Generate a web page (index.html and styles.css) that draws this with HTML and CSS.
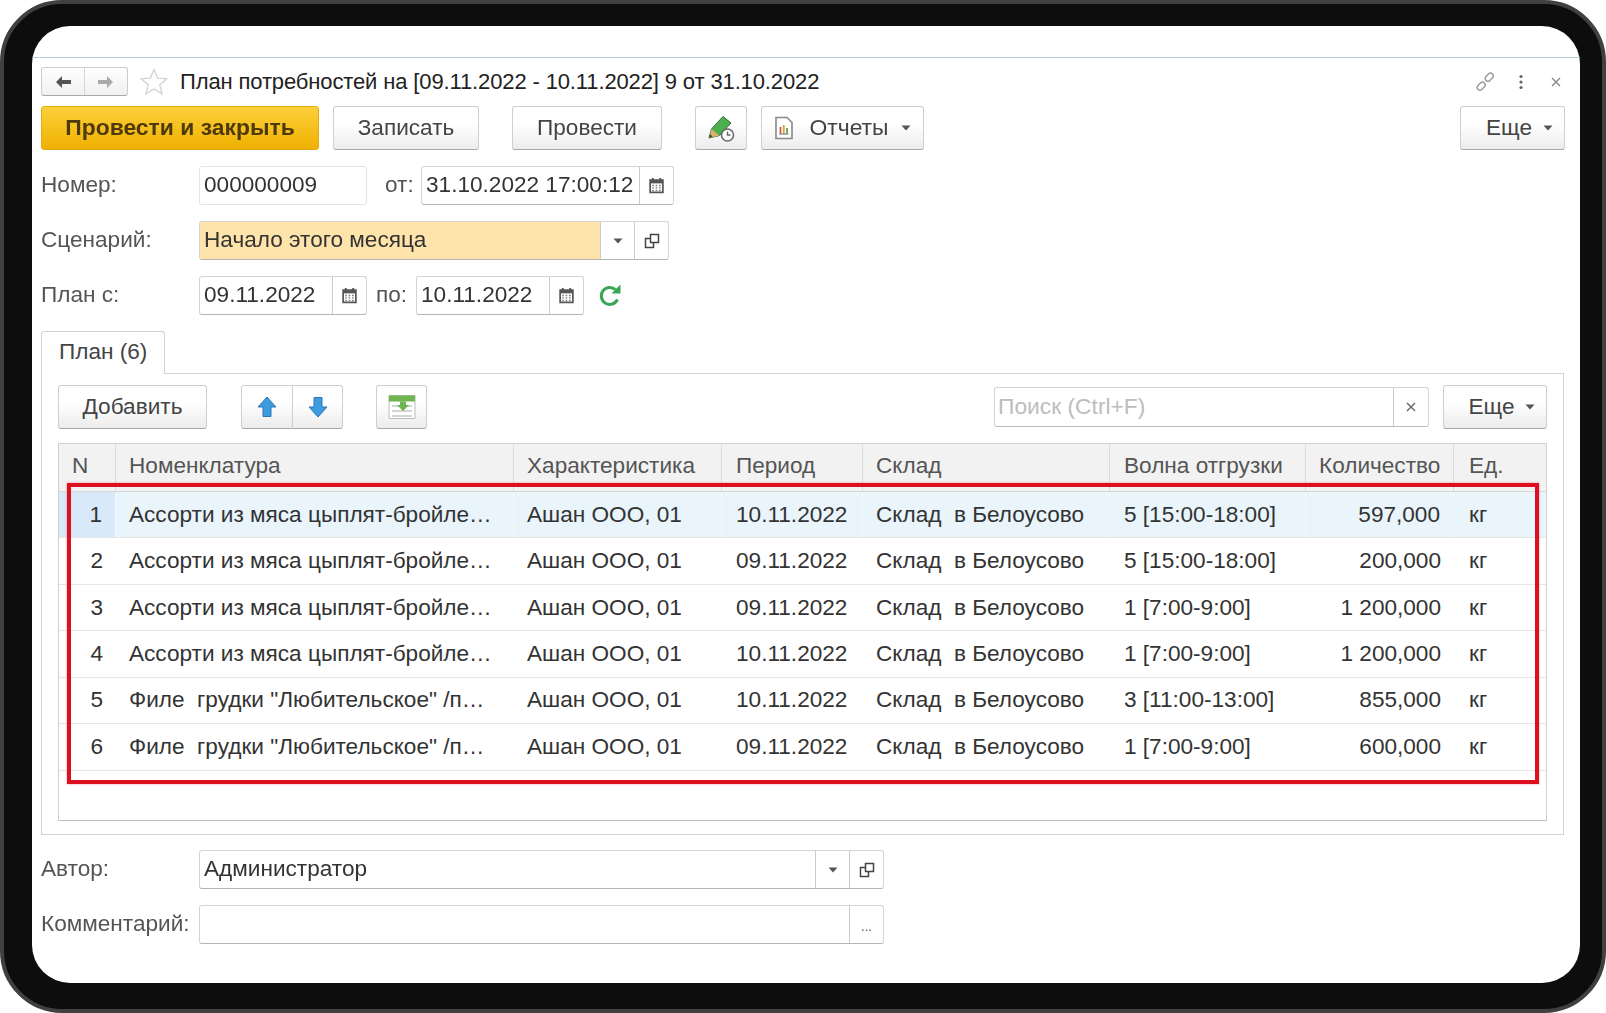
FILE: index.html
```html
<!DOCTYPE html>
<html lang="ru">
<head>
<meta charset="utf-8">
<title>План потребностей</title>
<link rel="stylesheet" href="styles.css">
</head>
<body>
<svg class="defs" width="0" height="0">
  <symbol id="cal" viewBox="0 0 16 16">
    <path d="M2 3h12v11.500H2z" fill="#fff" stroke="#555" stroke-width="1.600"/>
    <path d="M2 3h12v3H2z" fill="#555"/>
    <path d="M4.500 1v3M11.500 1v3" stroke="#555" stroke-width="1.800"/>
    <path d="M4 8h1.500M7.200 8h1.500M10.400 8h1.500M4 10.300h1.500M7.200 10.300h1.500M10.400 10.300h1.500M4 12.500h1.500M7.200 12.500h1.500M10.400 12.500h1.500" stroke="#777" stroke-width="1.200"/>
  </symbol>
  <symbol id="copy" viewBox="0 0 16 16">
    <path d="M6.500 1.500h8v8h-8z" fill="#fff" stroke="#444" stroke-width="1.500"/>
    <path d="M6.500 5.500h-5v9h8v-5" fill="none" stroke="#444" stroke-width="1.500"/>
  </symbol>
  <symbol id="caret" viewBox="0 0 10 6">
    <path d="M0.500 0.500h9L5 5.500z" fill="#555"/>
  </symbol>
</svg>

<div class="device">
  <main class="screen">
    <div class="top-space"></div>

    <div class="title-row">
      <div class="nav-group">
        <span class="nav-btn">
          <svg width="18" height="14" viewBox="0 0 18 14"><path d="M8 1L2 7l6 6V9h9V5H8z" fill="#555"/></svg>
        </span>
        <span class="nav-btn nav-btn-last">
          <svg width="18" height="14" viewBox="0 0 18 14"><path d="M10 1l6 6-6 6V9H1V5h9z" fill="#aaa"/></svg>
        </span>
      </div>
      <svg class="star" width="30" height="30" viewBox="0 0 30 30"><path d="M15 2.500l3.600 8.600 9.200.7-7 6 2.200 9L15 22l-8 4.800 2.200-9-7-6 9.200-.7z" fill="#fff" stroke="#d4d4d4" stroke-width="1.400"/></svg>
      <h1 class="doc-title">План потребностей на [09.11.2022 - 10.11.2022] 9 от 31.10.2022</h1>
      <div class="win-icons">
        <svg class="win-link" width="20" height="20" viewBox="0 0 20 20"><g fill="none" stroke="#999" stroke-width="1.400"><rect x="9.500" y="2.500" width="9" height="5.500" rx="2.700" transform="rotate(-45 14 5)"/><rect x="1.500" y="11.500" width="9" height="5.500" rx="2.700" transform="rotate(-45 6 14)"/></g></svg>
        <svg class="win-dots" width="6" height="16" viewBox="0 0 6 16"><g fill="#666"><circle cx="3" cy="2.500" r="1.600"/><circle cx="3" cy="8" r="1.600"/><circle cx="3" cy="13.500" r="1.600"/></g></svg>
        <svg width="12" height="12" viewBox="0 0 12 12"><path d="M2 2l8 8M10 2l-8 8" stroke="#888" stroke-width="1.400"/></svg>
      </div>
    </div>

    <div class="command-bar">
      <button class="btn btn-primary">Провести и закрыть</button>
      <button class="btn btn-write">Записать</button>
      <button class="btn btn-post">Провести</button>
      <button class="btn btn-icon">
        <svg width="30" height="30" viewBox="0 0 30 30">
          <path d="M3 25l2.500-9L17 3.500l8 6.500-11.500 12.500z" fill="#4caf50" stroke="#2e6b32" stroke-width="1"/>
          <path d="M3 25l2.500-9 8 6.500z" fill="#d9b36a"/>
          <path d="M3 25l1-3.800 2.800 2.400z" fill="#444"/>
          <circle cx="21.500" cy="22" r="6" fill="#fff" stroke="#666" stroke-width="1.500"/>
          <path d="M21.500 18.500V22h3" fill="none" stroke="#666" stroke-width="1.400"/>
        </svg>
      </button>
      <button class="btn btn-reports">
        <svg width="20" height="24" viewBox="0 0 20 24">
          <path d="M2 1.500h11l5 5v16H2z" fill="#fff" stroke="#888" stroke-width="1.600"/>
          <path d="M6.500 11v6.500" stroke="#d9534f" stroke-width="1.800"/><path d="M9.800 9v8.500" stroke="#e0a030" stroke-width="1.800"/><path d="M13 12v5.500" stroke="#5aa85a" stroke-width="1.800"/>
          <path d="M5 18h9.500" stroke="#666"/>
        </svg>
        <span>Отчеты</span>
        <svg class="caret" width="10" height="6"><use href="#caret"/></svg>
      </button>
      <button class="btn btn-more btn-more-top"><span>Еще</span><svg class="caret" width="10" height="6"><use href="#caret"/></svg></button>
    </div>

    <div class="form-row first-row">
      <label class="label">Номер:</label>
      <div class="field field-number"><span class="field-value">000000009</span></div>
      <label class="label-inline label-from">от:</label>
      <div class="field field-datetime">
        <span class="field-value">31.10.2022 17:00:12</span>
        <span class="field-btn"><svg width="17" height="17"><use href="#cal"/></svg></span>
      </div>
    </div>

    <div class="form-row">
      <label class="label">Сценарий:</label>
      <div class="field field-scenario">
        <span class="field-value field-yellow">Начало этого месяца</span>
        <span class="field-btn"><svg class="caret" width="10" height="6"><use href="#caret"/></svg></span>
        <span class="field-btn"><svg width="16" height="16"><use href="#copy"/></svg></span>
      </div>
    </div>

    <div class="form-row">
      <label class="label">План с:</label>
      <div class="field field-date">
        <span class="field-value">09.11.2022</span>
        <span class="field-btn"><svg width="17" height="17"><use href="#cal"/></svg></span>
      </div>
      <label class="label-inline label-to">по:</label>
      <div class="field field-date">
        <span class="field-value">10.11.2022</span>
        <span class="field-btn"><svg width="17" height="17"><use href="#cal"/></svg></span>
      </div>
      <svg class="refresh" width="26" height="26" viewBox="0 0 26 26"><path d="M20.500 16.500A8.500 8.500 0 1 1 18.500 6.600" fill="none" stroke="#3aa655" stroke-width="3"/><path d="M14.500 10.500h9v-9z" fill="#3aa655"/></svg>
    </div>

    <div class="tabs"><div class="tab">План (6)</div></div>

    <section class="panel">
      <div class="panel-bar">
        <button class="btn btn-add">Добавить</button>
        <div class="btn-group">
          <button class="btn btn-arrow">
            <svg width="22" height="24" viewBox="0 0 22 24"><path d="M11 2L2 12h5v9.500h8V12h5z" fill="#3d9be0" stroke="#2a78b5" stroke-width="1"/></svg>
          </button>
          <button class="btn btn-arrow btn-arrow-last">
            <svg width="22" height="24" viewBox="0 0 22 24"><path d="M11 22L2 12h5V2.500h8V12h5z" fill="#3d9be0" stroke="#2a78b5" stroke-width="1"/></svg>
          </button>
        </div>
        <button class="btn btn-table">
          <svg width="28" height="24" viewBox="0 0 28 24">
            <path d="M1 .5h26v23H1z" fill="#fff" stroke="#bbb"/>
            <path d="M1 .5h26v6H1z" fill="#6eb550"/>
            <path d="M4 11h20M4 16h20M4 21h20" stroke="#aaa"/>
            <path d="M12 6.500h6v3.500h3l-6 6-6-6h3z" fill="#6eb550"/>
          </svg>
        </button>
        <div class="search">
          <span class="search-input">Поиск (Ctrl+F)</span>
          <span class="search-clear"><svg width="10" height="10" viewBox="0 0 10 10"><path d="M1 1l8 8M9 1L1 9" stroke="#666" stroke-width="1.400"/></svg></span>
        </div>
        <button class="btn btn-more btn-more-panel"><span>Еще</span><svg class="caret" width="10" height="6"><use href="#caret"/></svg></button>
      </div>

      <div class="grid">
        <div class="grid-row grid-head">
          <div class="cell">N</div>
          <div class="cell">Номенклатура</div>
          <div class="cell">Характеристика</div>
          <div class="cell cell-date">Период</div>
          <div class="cell">Склад</div>
          <div class="cell cell-wave">Волна отгрузки</div>
          <div class="cell">Количество</div>
          <div class="cell cell-unit">Ед.</div>
        </div>
        <div class="grid-row grid-row-active">
          <div class="cell cell-num cell-num-active">1</div><div class="cell">Ассорти из мяса цыплят-бройле…</div><div class="cell">Ашан ООО, 01</div><div class="cell cell-date">10.11.2022</div><div class="cell">Склад  в Белоусово</div><div class="cell cell-wave">5 [15:00-18:00]</div><div class="cell cell-right">597,000</div><div class="cell cell-unit">кг</div>
        </div>
        <div class="grid-row">
          <div class="cell cell-num">2</div><div class="cell">Ассорти из мяса цыплят-бройле…</div><div class="cell">Ашан ООО, 01</div><div class="cell cell-date">09.11.2022</div><div class="cell">Склад  в Белоусово</div><div class="cell cell-wave">5 [15:00-18:00]</div><div class="cell cell-right">200,000</div><div class="cell cell-unit">кг</div>
        </div>
        <div class="grid-row">
          <div class="cell cell-num">3</div><div class="cell">Ассорти из мяса цыплят-бройле…</div><div class="cell">Ашан ООО, 01</div><div class="cell cell-date">09.11.2022</div><div class="cell">Склад  в Белоусово</div><div class="cell cell-wave">1 [7:00-9:00]</div><div class="cell cell-right">1 200,000</div><div class="cell cell-unit">кг</div>
        </div>
        <div class="grid-row">
          <div class="cell cell-num">4</div><div class="cell">Ассорти из мяса цыплят-бройле…</div><div class="cell">Ашан ООО, 01</div><div class="cell cell-date">10.11.2022</div><div class="cell">Склад  в Белоусово</div><div class="cell cell-wave">1 [7:00-9:00]</div><div class="cell cell-right">1 200,000</div><div class="cell cell-unit">кг</div>
        </div>
        <div class="grid-row">
          <div class="cell cell-num">5</div><div class="cell">Филе  грудки "Любительское" /п…</div><div class="cell">Ашан ООО, 01</div><div class="cell cell-date">10.11.2022</div><div class="cell">Склад  в Белоусово</div><div class="cell cell-wave">3 [11:00-13:00]</div><div class="cell cell-right">855,000</div><div class="cell cell-unit">кг</div>
        </div>
        <div class="grid-row">
          <div class="cell cell-num">6</div><div class="cell">Филе  грудки "Любительское" /п…</div><div class="cell">Ашан ООО, 01</div><div class="cell cell-date">09.11.2022</div><div class="cell">Склад  в Белоусово</div><div class="cell cell-wave">1 [7:00-9:00]</div><div class="cell cell-right">600,000</div><div class="cell cell-unit">кг</div>
        </div>
        <div class="highlight"></div>
      </div>
    </section>

    <div class="form-row author-row">
      <label class="label">Автор:</label>
      <div class="field field-wide">
        <span class="field-value">Администратор</span>
        <span class="field-btn"><svg class="caret" width="10" height="6"><use href="#caret"/></svg></span>
        <span class="field-btn"><svg width="16" height="16"><use href="#copy"/></svg></span>
      </div>
    </div>
    <div class="form-row">
      <label class="label">Комментарий:</label>
      <div class="field field-wide">
        <span class="field-value"></span>
        <span class="field-btn field-dots">...</span>
      </div>
    </div>
  </main>
</div>
</body>
</html>
```

FILE: styles.css
```css
* { box-sizing: border-box; }
html, body { margin: 0; padding: 0; background: #fff; }
body { font-family: "Liberation Sans", Arial, sans-serif; color: #333; font-size: 22.600px; overflow: hidden; }
.defs { position: absolute; }

.device {
  width: 1606px;
  height: 1013px;
  padding: 22px 22px 26px 27px;
  background: #0d0d0d;
  border: 4px solid #404040;
  border-radius: 62px;
}
.screen {
  width: 1548px;
  height: 957px;
  padding: 0 15px 0 9px;
  margin-left: 1px;
  background: #fff;
  border-radius: 38px;
  overflow: hidden;
  filter: blur(0.4px);
}
.top-space { height: 32px; margin: 0 -15px 0 -9px; border-bottom: 1px solid #b9ced6; }

/* title row */
.title-row { display: flex; align-items: center; height: 29px; margin-top: 9px; }
.nav-group { display: flex; width: 87px; height: 29px; border: 1px solid #ccc; border-bottom-color: #aaa; border-radius: 3px; background: linear-gradient(#fff, #f0f0f0); }
.nav-btn { flex: 1; display: flex; align-items: center; justify-content: center; }
.nav-btn-last { border-left: 1px solid #d5d5d5; }
.star { margin-left: 11px; }
.doc-title { margin: 0 0 0 11px; font-size: 22px; letter-spacing: -0.130px; font-weight: 400; color: #222; white-space: nowrap; }
.win-icons { margin-left: auto; display: flex; align-items: center; gap: 24px; padding-right: 3px; }
.win-dots { margin: 0 2px 0 -1px; }

/* buttons */
.btn {
  display: inline-flex;
  align-items: center;
  justify-content: center;
  padding: 0;
  height: 44px;
  font: inherit;
  color: #444;
  background: linear-gradient(#fff 40%, #ececec);
  border: 1px solid #cfcfcf;
  border-bottom-color: #a8a8a8;
  border-radius: 3px;
}
.command-bar { display: flex; align-items: center; margin-top: 10px; }
.btn-primary { width: 278px; padding-bottom: 2px; background: linear-gradient(#fbd03c, #efb100); border-color: #e0aa10; font-weight: 700; font-size: 22.900px; color: #4e3a08; }
.btn-write { width: 146px; margin-left: 14px; }
.btn-post { width: 150px; margin-left: 33px; }
.btn-icon { width: 52px; margin-left: 33px; }
.btn-reports { width: 163px; margin-left: 14px; }
.btn-reports span { margin: 0 12px 2px 15px; font-size: 22.900px; }
.btn-more span { margin-right: 11px; }
.btn-more-top { width: 105px; margin-left: auto; padding-left: 14px; }
.caret { display: block; }

/* form */
.form-row { display: flex; align-items: center; height: 39px; margin-top: 16px; }
.label { width: 158px; flex: none; padding-bottom: 2px; color: #555; white-space: nowrap; }
.label-inline { flex: none; padding-bottom: 2px; color: #555; }
.label-from { margin-left: 18px; width: 36px; }
.label-to { margin-left: 9px; width: 40px; }
.field { display: flex; height: 39px; background: #fff; border: 1px solid #d4d4d4; border-bottom-color: #b5b5b5; border-radius: 3px; }
.field-value { flex: 1; display: flex; align-items: center; padding: 0 0 2px 4px; color: #333; white-space: nowrap; min-width: 0; }
.field-yellow { background: #fee4ab; }
.field-btn { width: 34px; flex: none; display: flex; align-items: center; justify-content: center; border-left: 1px solid #ccc; }
.field-number { width: 168px; border-color: #e4e4e4; }
.field-datetime { width: 253px; }
.field-scenario { width: 470px; }
.field-date { width: 168px; }
.field-wide { width: 685px; }
.field-dots { color: #555; font-size: 13px; align-items: flex-end; padding-bottom: 9px; }
.refresh { margin-left: 13px; }

/* tabs */
.tabs { display: flex; height: 43px; margin-top: 16px; position: relative; z-index: 1; }
.tab { width: 124px; height: 43px; padding: 7px 0 0 17px; background: #fff; border: 1px solid #d2d2d2; border-bottom: 0; border-radius: 3px 3px 0 0; color: #444; }

/* panel */
.panel { height: 462px; margin: -1px 1px 0 0; padding: 11px 16px 0; border: 1px solid #d2d2d2; }
.panel-bar { display: flex; align-items: center; height: 44px; }
.btn-add { width: 149px; }
.btn-group { display: flex; margin-left: 34px; }
.btn-arrow { width: 52px; border-radius: 3px 0 0 3px; }
.btn-arrow-last { width: 50px; border-left: 0; border-radius: 0 3px 3px 0; }
.btn-table { width: 51px; margin-left: 33px; }
.search { display: flex; width: 435px; height: 40px; margin-left: auto; border: 1px solid #d4d4d4; border-bottom-color: #bbb; border-radius: 3px; background: #fff; }
.search-input { flex: 1; display: flex; align-items: center; padding: 0 0 2px 3px; font-size: 22.800px; color: #bdbdbd; }
.search-clear { width: 35px; display: flex; align-items: center; justify-content: center; border-left: 1px solid #ccc; }
.btn-more-panel { width: 104px; margin-left: 14px; padding-left: 14px; }

/* grid */
.grid { position: relative; height: 378px; margin-top: 14px; border: 1px solid #d0d0d0; border-bottom-color: #bdbdbd; }
.grid-row {
  display: grid;
  grid-template-columns: 57px 398px 208px 141px 247px 196px 148px 92px;
  height: 46.450px;
  border-bottom: 1px solid #e6e6e6;
}
.grid-head { height: 48px; background: #f2f2f2; border-bottom-color: #d8d8d8; color: #555; }
.grid-head .cell { padding-bottom: 3px; border-right: 1px solid #dcdcdc; }
.grid-head .cell:last-child { border-right: 0; }
.cell { display: flex; align-items: center; padding: 0 13px 0 13px; white-space: pre; overflow: hidden; color: #333; }
.grid-head .cell { color: #555; }
.cell-date, .cell-wave { padding-left: 14px; }
.cell-unit { padding-left: 15px; }
.cell-num { justify-content: flex-end; padding-right: 13px; }
.cell-right { justify-content: flex-end; }
.grid-row-active { background: #e9f4fb; }
.grid-row-active .cell { border-right: 1px solid #f1f8fd; }
.cell-num-active { background: #d8eaf9; }
.highlight { position: absolute; left: 8px; top: 39px; width: 1472px; height: 301px; border: 4px solid #dc101e; box-shadow: 0 0 2px rgba(220, 16, 30, .45); pointer-events: none; }

.author-row { margin-top: 15px; }
```
